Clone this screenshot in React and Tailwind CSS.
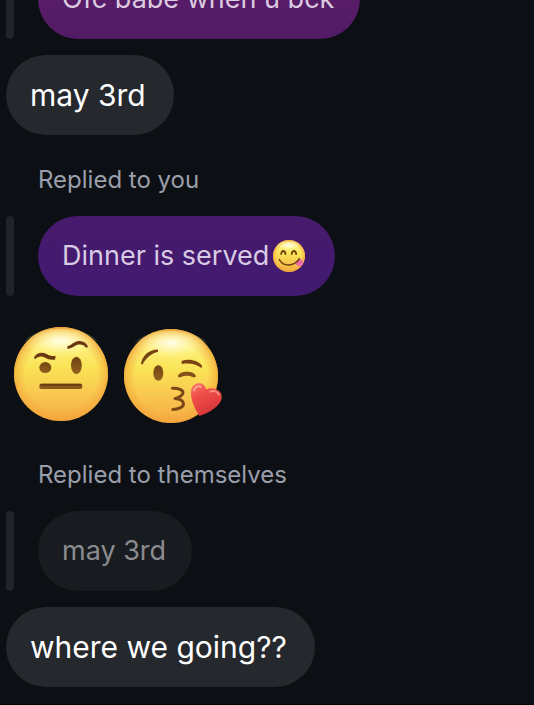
import clsx from "clsx";

const FaceDefs = () => (
    <svg className="absolute h-0 w-0" aria-hidden="true">
        <defs>
            <linearGradient id="skin" x1="0" y1="0" x2="0" y2="1">
                <stop offset="0" stopColor="#fbe680" />
                <stop offset="0.2" stopColor="#fdf07c" />
                <stop offset="0.42" stopColor="#fae457" />
                <stop offset="0.7" stopColor="#f9c850" />
                <stop offset="1" stopColor="#f5ab42" />
            </linearGradient>
            <radialGradient id="rim" cx="0.5" cy="0.52" r="0.52">
                <stop offset="0.74" stopColor="#f0982c" stopOpacity="0" />
                <stop offset="0.9" stopColor="#f2a136" stopOpacity="0.45" />
                <stop offset="1" stopColor="#ec952a" stopOpacity="0.85" />
            </radialGradient>
            <radialGradient id="shine" cx="0.5" cy="0.35" r="0.5">
                <stop offset="0" stopColor="#fffef0" stopOpacity="0.95" />
                <stop offset="0.45" stopColor="#fffbc4" stopOpacity="0.6" />
                <stop offset="1" stopColor="#fff27a" stopOpacity="0" />
            </radialGradient>
            <linearGradient id="eye" x1="0" y1="0" x2="0" y2="1">
                <stop offset="0" stopColor="#6f4312" />
                <stop offset="1" stopColor="#946020" />
            </linearGradient>
            <linearGradient id="heart" x1="0" y1="0" x2="0.5" y2="1">
                <stop offset="0" stopColor="#fa7b6c" />
                <stop offset="0.4" stopColor="#f04f47" />
                <stop offset="1" stopColor="#d8343a" />
            </linearGradient>
        </defs>
    </svg>
);

const RaisedBrow = () => (
    <svg viewBox="0 0 110 110" className="size-[110px]" role="img" aria-label="🤨">
        <circle cx="55" cy="54" r="47" fill="url(#skin)" />
        <circle cx="55" cy="54" r="47" fill="url(#rim)" />
        <ellipse cx="55" cy="26" rx="38" ry="17" fill="url(#shine)" />
        <path d="M28 37.3C31 32.6 36 31.8 40.5 34C44 35.9 46 36.3 49.5 35.8L49.2 39.4C45 40.2 42 39.2 38.8 37.4C35 35.6 32 36.4 29 39.2Z" fill="#6b3712" />
        <path d="M61 26.4C65.5 25.4 67.5 21.6 72.8 21C77.3 20.7 80.4 22.8 82 26.6L80.5 28C78 25 75.5 24.2 72.8 24.6C69 25.2 66.5 28.4 61.8 29Z" fill="#6b3712" />
        <ellipse cx="39.3" cy="47.6" rx="6" ry="5.5" fill="url(#eye)" />
        <ellipse cx="70.4" cy="45.3" rx="5.4" ry="8.6" fill="url(#eye)" />
        <rect x="33.3" y="63.7" width="43" height="5.3" rx="2" fill="#8a571d" />
        <rect x="34" y="63.7" width="41.6" height="2" rx="1" fill="#6b3f14" />
    </svg>
);

const BlowingKiss = () => (
    <svg viewBox="0 0 110 110" className="size-[110px]" role="img" aria-label="😘">
        <circle cx="55" cy="56" r="47" fill="url(#skin)" />
        <circle cx="55" cy="56" r="47" fill="url(#rim)" />
        <ellipse cx="55" cy="28" rx="38" ry="17" fill="url(#shine)" />
        <path d="M25 44C25.8 36 33 29.2 42 29.4L42 32C35.5 33.2 30 38 26.6 44.4Z" fill="#794414" />
        <path d="M65.5 41C72.5 38.2 82 40 86.2 46L85.4 48C80 43.8 73 42.8 65.8 44Z" fill="#794414" />
        <ellipse cx="42.3" cy="53" rx="5" ry="7.7" fill="url(#eye)" />
        <path d="M62 55.8C63.5 50.5 78 50 79.8 55.8C79.8 57.8 78 57.8 76.5 57C73 55.3 68.5 55.5 65 57C63 57.8 62 57.5 62 55.8Z" fill="#85501a" />
        <path d="M56.5 68.3C62 68 67.5 70 67 73C66.5 76 61 78 59 78.6C63 79 67.5 80.5 67.5 84C67.5 87.5 62 89.3 56.8 89.5" fill="none" stroke="#7b4716" strokeWidth="3" strokeLinecap="round" strokeLinejoin="round" />
        <path d="M83.5 96C78.5 88.5 74 78.5 75.2 70.5C76.5 61.8 88 60.3 90.3 69.5C95.5 66.2 105.5 69 105.8 76.5C106 85 94 92.5 83.5 96Z" fill="url(#heart)" />
        <path d="M78 70.5C79 66.5 82.5 65.3 85 66.8" fill="none" stroke="#ffb9ac" strokeWidth="2" strokeLinecap="round" opacity="0.7" />
        <path d="M94.5 71.5C98 70 101.5 71.5 102.8 74.5" fill="none" stroke="#ffb9ac" strokeWidth="2" strokeLinecap="round" opacity="0.6" />
    </svg>
);

const Yummy = () => (
    <svg viewBox="0 0 36 36" className="mx-0.5 size-9" role="img" aria-label="😋">
        <circle cx="18" cy="18" r="16" fill="url(#skin)" />
        <circle cx="18" cy="18" r="16" fill="url(#rim)" />
        <ellipse cx="18" cy="9" rx="13" ry="6" fill="url(#shine)" />
        <path d="M10.2 16C10.7 12 13.8 12 14.5 16M20.7 16C21.4 12 24.5 12 25.2 16" fill="none" stroke="#70420f" strokeWidth="1.8" strokeLinecap="round" />
        <path d="M24 24L28.5 20.5C31.5 21.5 33 24 31.5 27C28.5 29.5 25 28.3 24 24Z" fill="#ee6ea6" />
        <path d="M26.5 22.8L29.5 25.4" fill="none" stroke="#d14d88" strokeWidth="0.8" />
        <path d="M8.3 21.5C11.5 28.5 23 29.3 28.3 20.6" fill="none" stroke="#70420f" strokeWidth="1.5" strokeLinecap="round" />
    </svg>
);

const Bubble = ({ children }) => (
    <p className="flex min-h-20 w-fit items-center rounded-[40px] bg-[#25282d] pr-7 pl-6 text-[30px] leading-10 text-white">
        {children}
    </p>
);

const Quote = ({ label, className, children }) => (
    <div>
        {label && <p className="mt-[13px] mb-5 pl-8 text-2xl leading-8 text-[#9b9fab]">{label}</p>}
        <blockquote className="flex gap-6">
            <span className="w-2 shrink-0 rounded-full bg-[#202328]" />
            <p className={clsx("flex min-h-20 w-fit items-center rounded-[40px] pr-[26px] pl-6 text-[27px] leading-9", className)}>
                {children}
            </p>
        </blockquote>
    </div>
);

const App = () => {
    return (
        <main className="flex h-screen flex-col justify-end gap-4 overflow-hidden border-b border-black bg-[#0c0f13] px-1.5 pb-[17px] font-['Inter',sans-serif]">
            <FaceDefs />
            <Quote className="bg-linear-to-b from-[#5c1d69] to-[#521b66] text-[#dccbe0]">Ofc babe when u bck</Quote>
            <Bubble>may 3rd</Bubble>
            <Quote label="Replied to you" className="bg-linear-to-b from-[#481a6d] to-[#401a70] text-[#d8cbe3]">
                Dinner is served
                <Yummy />
            </Quote>
            <div className="flex pt-2">
                <RaisedBrow />
                <BlowingKiss />
            </div>
            <Quote label="Replied to themselves" className="bg-[#181b1f] text-[#8b8c8e]">may 3rd</Quote>
            <Bubble>where we going??</Bubble>
        </main>
    );
};

export default App;
